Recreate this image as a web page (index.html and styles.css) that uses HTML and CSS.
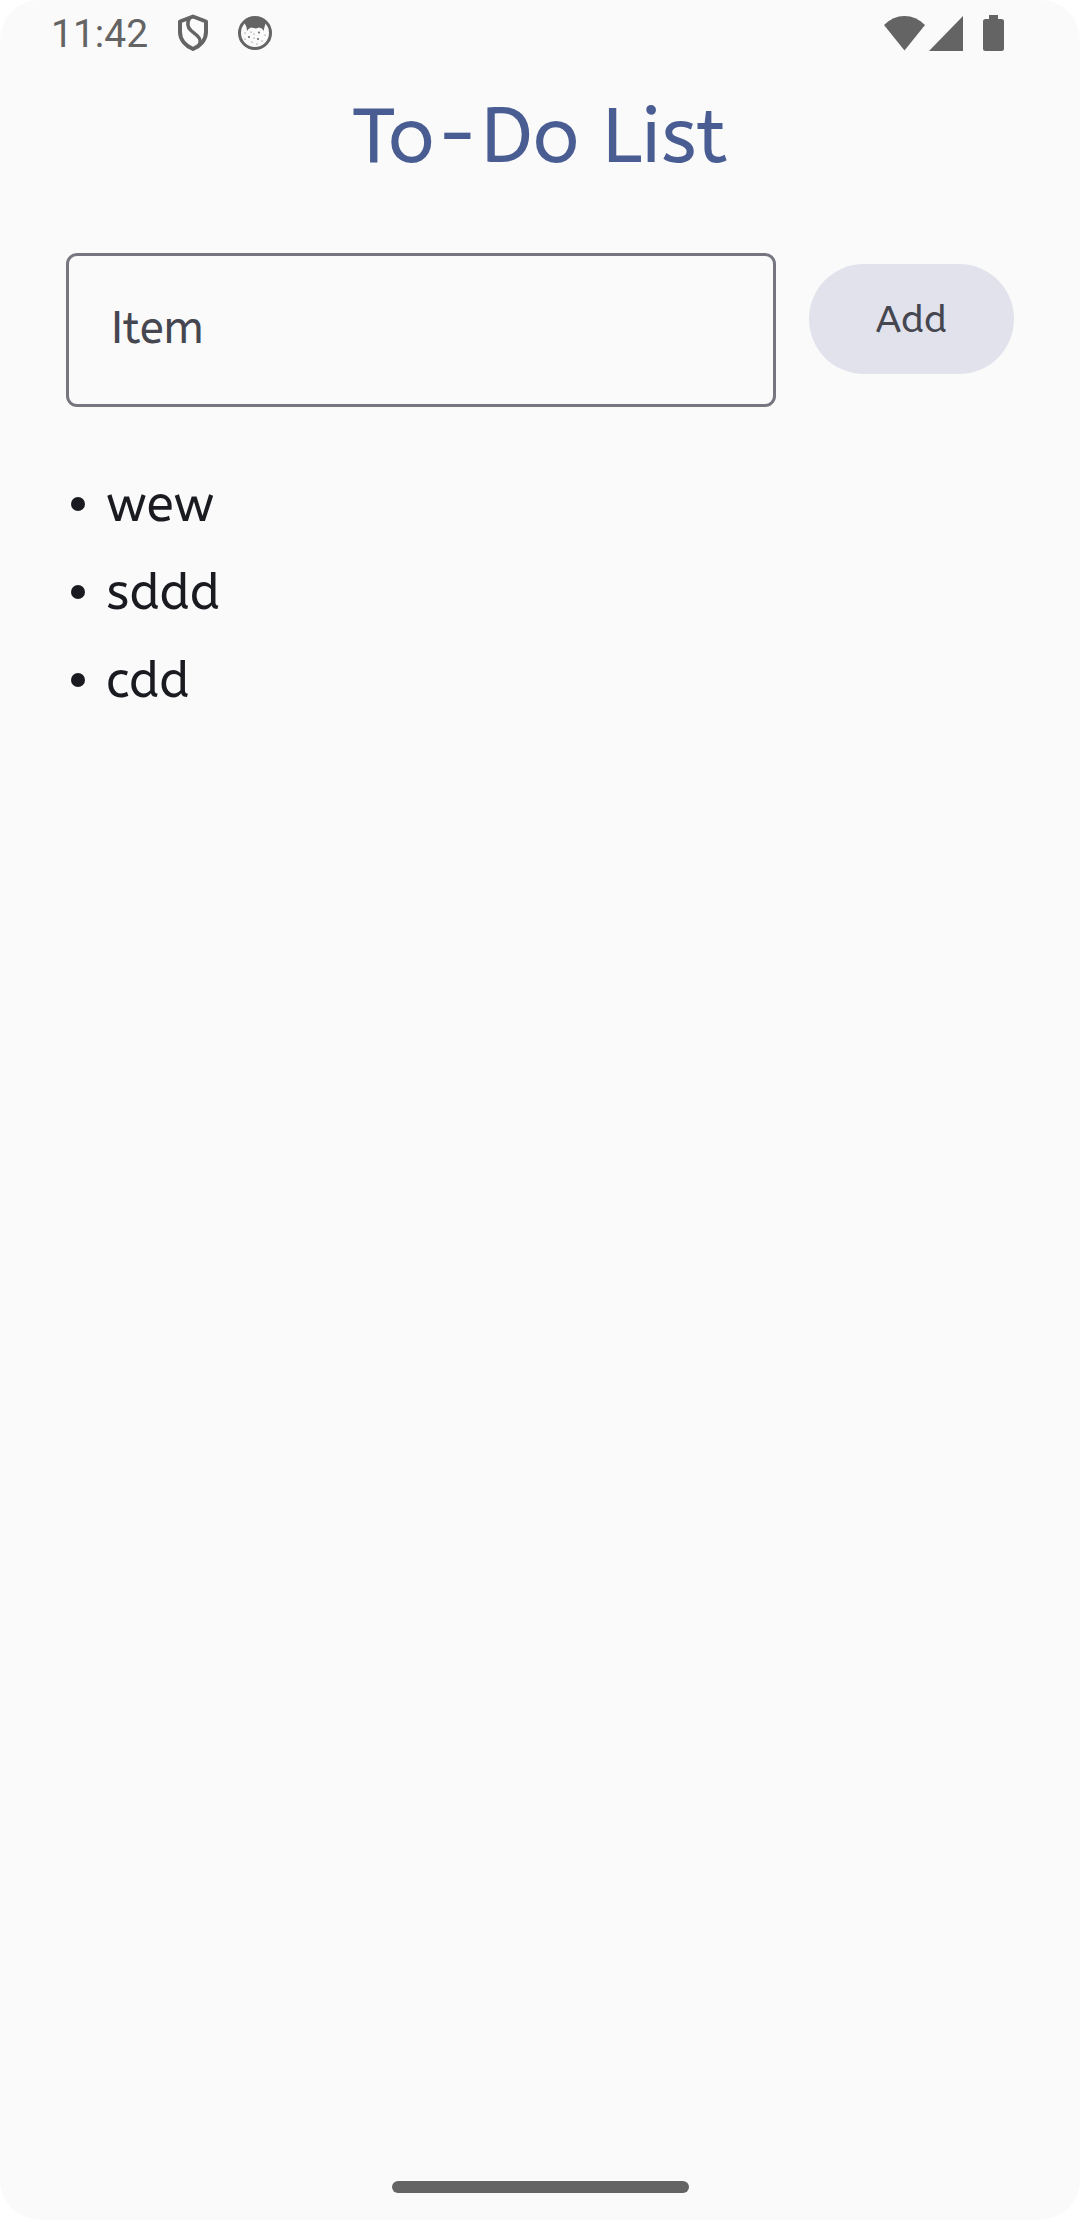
FILE: index.html
```html
<!DOCTYPE html>
<html lang="en">
<head>
  <meta charset="utf-8">
  <meta name="viewport" content="width=device-width, initial-scale=1">
  <title>To-Do List</title>
  <link rel="stylesheet" href="styles.css">
</head>
<body>
  <div class="screen">
    <header class="status-bar">
      <div class="status-group status-left">
        <time class="clock">11:42</time>
        <svg class="icon-shield" viewBox="0 0 32 38" aria-hidden="true">
          <path d="M16 2.500 29 7.500V18C29 26 23 32 16 35 9 32 3 26 3 18V7.500Z" fill="none" stroke="currentColor" stroke-width="4" stroke-linejoin="round"/>
          <path d="M12.500 4C10 9 10 13 14 16.500L20 21.500C24 25 24 28 21.500 32" fill="none" stroke="currentColor" stroke-width="3.500"/>
        </svg>
        <svg class="icon-face" viewBox="0 0 36 36" aria-hidden="true">
          <circle cx="18" cy="18" r="15.500" fill="none" stroke="currentColor" stroke-width="3"/>
          <path d="M7 7Q18-1 29 7L27.500 12 26.500 16 25 13.500 22 12.500 19 13.500 14 12.500 11.500 14 10 16 9.500 12Z" fill="currentColor"/>
          <g fill="currentColor">
            <circle cx="12" cy="22" r="1"/><circle cx="22" cy="17.500" r="1"/><circle cx="21" cy="24" r="1"/>
            <circle cx="8" cy="18" r=".6"/><circle cx="17" cy="19" r=".6"/><circle cx="28" cy="20" r=".6"/>
            <circle cx="8" cy="24" r=".6"/><circle cx="15" cy="27" r=".6"/><circle cx="25" cy="26" r=".6"/>
            <circle cx="20" cy="29" r=".6"/><circle cx="14" cy="17" r=".6"/><circle cx="17" cy="23" r=".6"/>
          </g>
        </svg>
      </div>
      <div class="status-group status-right">
        <svg class="icon-wifi" viewBox="0 0 41 35" aria-hidden="true"><path d="M0 9Q9 0 20.500 0T41 9L20.500 34.500Z" fill="currentColor"/></svg>
        <svg class="icon-signal" viewBox="0 0 34 35" aria-hidden="true"><path d="M34 0V35H0Z" fill="currentColor"/></svg>
        <svg class="icon-battery" viewBox="0 0 21 36" aria-hidden="true"><path d="M6 0H15V4H18.500Q21 4 21 6.500V33.500Q21 36 18.500 36H2.500Q0 36 0 33.500V6.500Q0 4 2.500 4H6Z" fill="currentColor"/></svg>
      </div>
    </header>

    <main class="content">
      <h1 class="title">To-Do List</h1>
      <form class="add-form">
        <input class="item-input" type="text" name="item" placeholder="Item" aria-label="Item" autocomplete="off">
        <button class="add-button" type="button">Add</button>
      </form>
      <ul class="todo-list">
        <li class="todo-item">wew</li>
        <li class="todo-item">sddd</li>
        <li class="todo-item">cdd</li>
      </ul>
    </main>

    <footer class="nav-bar"><div class="nav-handle"></div></footer>
  </div>
</body>
</html>
```
FILE: styles.css
```css
* {
  box-sizing: border-box;
}

body {
  margin: 0;
  background: #fff;
  color: #1a1b21;
  font-family: ABeeZee, "Noto Sans", sans-serif;
}

.screen {
  display: flex;
  flex-direction: column;
  min-height: 100vh;
  border-radius: 40px;
  background: #fafafa;
}

.status-bar {
  display: flex;
  justify-content: space-between;
  align-items: center;
  height: 66px;
  padding: 0 76px 0 51px;
  color: #646464;
}

.status-group {
  display: flex;
  align-items: center;
}

.clock {
  margin-right: 29px;
  padding-top: 2px;
  font-family: Roboto, sans-serif;
  font-size: 39px;
  line-height: 64px;
}

.icon-shield {
  width: 32px;
  height: 38px;
  margin-right: 28px;
}

.icon-face {
  width: 36px;
  height: 36px;
}

.icon-wifi {
  width: 41px;
  height: 35px;
  margin-right: 4px;
}

.icon-signal {
  width: 34px;
  height: 35px;
  margin-right: 20px;
}

.icon-battery {
  width: 21px;
  height: 36px;
}

.content {
  flex: 1;
  padding: 0 66px;
}

.title {
  margin: 0;
  color: #495d92;
  font-size: 77px;
  font-weight: 400;
  line-height: 142px;
  text-align: center;
}

.add-form {
  display: flex;
  align-items: flex-start;
  gap: 33px;
  margin-top: 45px;
}

.item-input {
  flex: 1;
  min-width: 0;
  height: 154px;
  padding: 0 42px 2px;
  border: 3px solid #757680;
  border-radius: 11px;
  background: transparent;
  color: #1a1b21;
  font: inherit;
  font-size: 44px;
}

.item-input::placeholder {
  color: #45464f;
  opacity: 1;
}

.add-button {
  width: 205px;
  height: 110px;
  margin-top: 11px;
  padding: 0;
  border: 0;
  border-radius: 55px;
  background: #e1e2ec;
  color: #45464f;
  font: inherit;
  font-size: 38px;
}

.todo-list {
  margin: 54px 0 0;
  padding: 0;
  list-style: none;
}

.todo-item {
  display: flex;
  align-items: center;
  gap: 21px;
  padding-left: 5px;
  font-size: 50px;
  line-height: 88px;
}

.todo-item::before {
  width: 14px;
  height: 14px;
  margin-bottom: 2px;
  border-radius: 50%;
  background: currentColor;
  content: "";
}

.nav-bar {
  display: flex;
  justify-content: center;
  padding-bottom: 27px;
}

.nav-handle {
  width: 297px;
  height: 12px;
  border-radius: 6px;
  background: #646464;
}
```
